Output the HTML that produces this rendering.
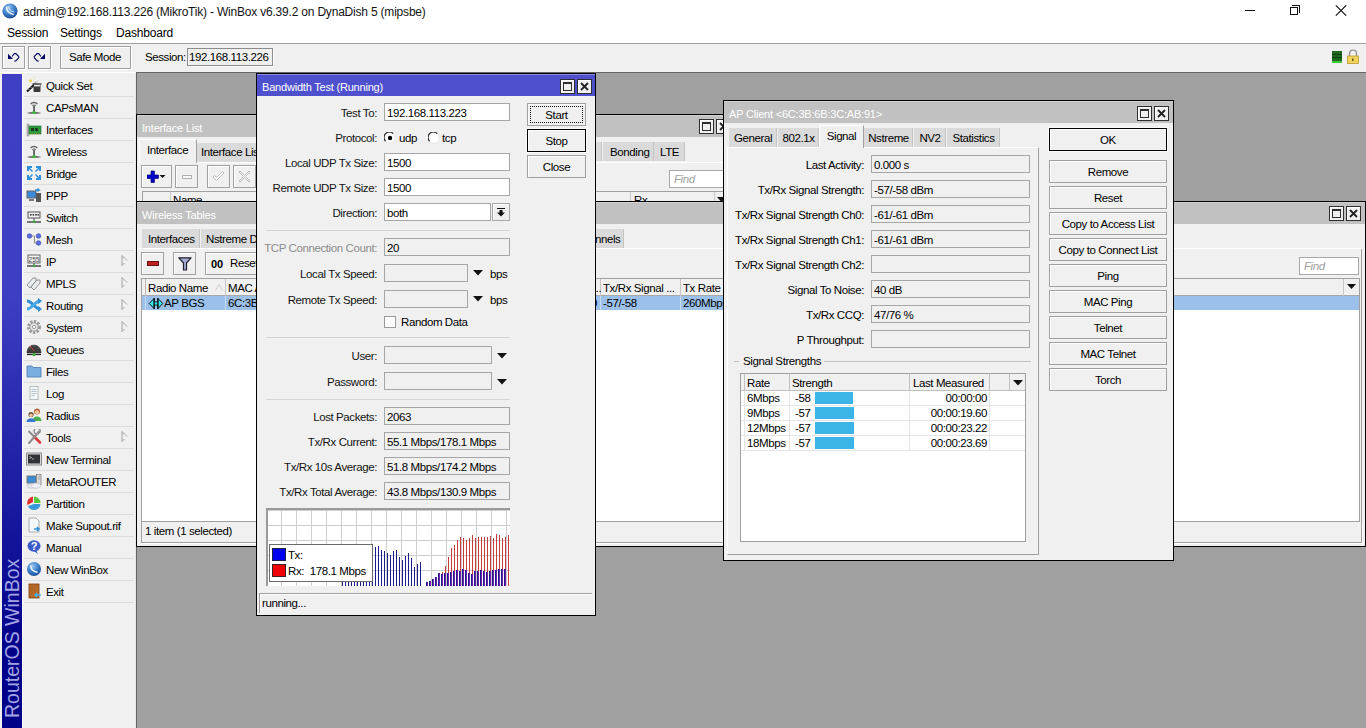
<!DOCTYPE html>
<html><head><meta charset="utf-8">
<style>
*{box-sizing:border-box}
html,body{margin:0;padding:0}
body{width:1366px;height:728px;overflow:hidden;position:relative;background:#fff;font-family:"Liberation Sans",sans-serif;font-size:11.5px;letter-spacing:-0.4px;color:#000}
.a{position:absolute}
.t{position:absolute;white-space:nowrap;line-height:14px}
.rt{position:absolute;white-space:nowrap;line-height:14px;text-align:right}
.btn{position:absolute;background:#e1e1e1;border:1px solid #adadad}
.fld{position:absolute;background:#fff;border:1px solid #a0a0a0}
.dis{position:absolute;background:#f0f0f0;border:1px solid #a0a0a0}
.win{position:absolute;background:#f0f0f0;border:1px solid #000;overflow:hidden}
.ttl{position:absolute;left:0;right:0;top:0;height:22px;background:#c1c1c1;border-top:1px solid #d2d2d2}
.ttlA{position:absolute;left:0;right:0;top:0;height:22px;background:#4e50ce;border-top:1px solid #8c8cd8}
.ttx{position:absolute;left:4px;top:4px;color:#fff;font-size:11px;letter-spacing:-0.2px;white-space:nowrap;line-height:14px}
.wb{position:absolute;width:15px;height:15px;background:#f0f0f0;border:1px solid #2e2e2e;box-shadow:inset 1px 1px 0 #fff}
.tab{position:absolute;background:#dadada;height:19px;border-right:1px solid #c4c4c4}
.tabA{position:absolute;background:#f0f0f0;border-left:1px solid #fff;border-top:1px solid #fff;border-right:1px solid #a0a0a0}
.sep{position:absolute;height:1px;background:#d7d7d7}

</style></head>
<body>
<!-- title bar -->
<svg class="a" style="left:2px;top:3px" width="16" height="16" viewBox="0 0 16 16">
 <defs><radialGradient id="gI" cx="40%" cy="30%" r="75%"><stop offset="0" stop-color="#9cc8f0"/><stop offset="0.55" stop-color="#3a7cc8"/><stop offset="1" stop-color="#1a4890"/></radialGradient></defs>
 <circle cx="8" cy="8" r="7.6" fill="url(#gI)"/>
 <path d="M4.6 3.8 Q4.2 10 11.8 11.6" stroke="#fff" stroke-width="1.3" fill="none" opacity=".95"/>
 <path d="M6.8 3.6 Q6.6 8 12.4 9" stroke="#fff" stroke-width="0.9" fill="none" opacity=".8"/>
</svg>
<div class="t" style="left:23px;top:5px;font-size:12px;letter-spacing:-0.2px;color:#141414">admin@192.168.113.226 (MikroTik) - WinBox v6.39.2 on DynaDish 5 (mipsbe)</div>
<div class="a" style="left:1245px;top:10px;width:10px;height:1px;background:#111"></div>
<div class="a" style="left:1292px;top:5px;width:8px;height:8px;border-top:1px solid #111;border-right:1px solid #111"></div>
<div class="a" style="left:1290px;top:7px;width:8px;height:8px;border:1px solid #111;background:#fff"></div>
<svg class="a" style="left:1335px;top:5px" width="12" height="11" viewBox="0 0 12 11"><path d="M0.8 0.3 L11.2 10.7 M11.2 0.3 L0.8 10.7" stroke="#111" stroke-width="1.05"/></svg>
<!-- menu -->
<div class="t" style="left:7px;top:26px;font-size:12px;letter-spacing:-0.2px">Session</div>
<div class="t" style="left:60px;top:26px;font-size:12px;letter-spacing:-0.2px">Settings</div>
<div class="t" style="left:116px;top:26px;font-size:12px;letter-spacing:-0.2px">Dashboard</div>
<div class="a" style="left:0;top:43px;width:1366px;height:1px;background:#a0a0a0"></div>
<!-- toolbar -->
<div class="a" style="left:0;top:44px;width:1366px;height:28px;background:#f0f0f0"></div>
<div class="btn" style="left:2px;top:46px;width:23px;height:23px;background:#efefef;border-color:#a0a0a0;box-shadow:inset 1px 1px 0 #fff,1px 1px 0 #fff"></div>
<div class="btn" style="left:28px;top:46px;width:23px;height:23px;background:#efefef;border-color:#a0a0a0;box-shadow:inset 1px 1px 0 #fff,1px 1px 0 #fff"></div>
<svg class="a" style="left:0;top:44px" width="56" height="28" viewBox="0 44 56 28">
 <path d="M8 53.8 L8 58.9 L13 58.9 Z" fill="#000060"/>
 <path d="M12 56.5 L14.3 53.6 L15.9 53.6 L18.7 56.4 L18.7 57.9 L15.8 61 L14.2 61" stroke="#000060" stroke-width="1.1" fill="none"/>
 <path d="M45 53.8 L45 58.9 L40 58.9 Z" fill="#000060"/>
 <path d="M41 56.5 L38.7 53.6 L37.1 53.6 L34.3 56.4 L34.3 57.9 L37.2 61 L38.8 61" stroke="#000060" stroke-width="1.1" fill="none"/>
</svg>
<div class="btn" style="left:60px;top:46px;width:71px;height:23px;background:#efefef;border-color:#a0a0a0;box-shadow:inset 1px 1px 0 #fff,1px 1px 0 #fff"></div>
<div class="t" style="left:69px;top:50px">Safe Mode</div>
<div class="t" style="left:145px;top:50px">Session:</div>
<div class="a" style="left:187px;top:48px;width:86px;height:18px;background:#f0f0f0;border:1px solid #8c8c8c;box-shadow:1px 1px 0 #fff"></div>
<div class="t" style="left:189px;top:50px">192.168.113.226</div>
<!-- status icons -->
<div class="a" style="left:1332px;top:51px;width:10px;height:12px;background:#1e6a1e;border-bottom:2px solid #38c838"></div>
<div class="a" style="left:1332px;top:54px;width:10px;height:1px;background:#0d3d0d"></div>
<div class="a" style="left:1332px;top:57px;width:10px;height:1px;background:#0d3d0d"></div>
<svg class="a" style="left:1346px;top:49px" width="14" height="15" viewBox="0 0 14 15">
 <path d="M3.5 7 V4.5 A3.5 3.5 0 0 1 10.5 4.5 V7" stroke="#8a8a8a" stroke-width="1.2" fill="none"/>
 <rect x="1.5" y="7" width="11" height="7.5" fill="#f2d45c" stroke="#b89a2a" stroke-width="0.8"/>
 <rect x="6" y="9.5" width="1.5" height="2.5" fill="#6b5a10"/>
</svg>
<!-- MDI background -->
<div class="a" style="left:136px;top:72px;width:1230px;height:656px;background:#a0a0a0;border-left:1px solid #646464;border-top:1px solid #646464"></div>

<div class="a" style="left:0;top:73px;width:136px;height:655px;background:#f0f0f0"></div>
<div class="a" style="left:22px;top:74px;width:1px;height:654px;background:#fff"></div>
<div class="a" style="left:2px;top:74px;width:20px;height:654px;background:linear-gradient(to bottom,#3f3fc5 0%,#3e3ec4 34%,#000088 88%,#000088 100%)"></div>
<div class="a" style="left:135px;top:73px;width:1px;height:655px;background:#e6e6e6"></div>
<div class="t" style="left:12px;top:622px;width:170px;height:22px;line-height:22px;font-size:19.5px;letter-spacing:0;color:#a4a4e4;transform:translate(-85px,0) rotate(-90deg);transform-origin:85px 11px;text-align:left">RouterOS WinBox</div>
<svg class="a" style="left:26px;top:77px" width="16" height="16" viewBox="0 0 16 16"><path d="M4.5 1.5 l0.6 1.4 1.5 0.3 -1.1 1 0.3 1.5 -1.3-0.8 -1.3 0.8 0.3-1.5 -1.1-1 1.5-0.3z" fill="#f0d040"/><circle cx="8.5" cy="0.8" r="0.6" fill="#e8d060"/><path d="M1 14.5 L11 5" stroke="#111" stroke-width="2.2"/><path d="M2.5 13 L3.3 12.2 M5 10.6 L5.8 9.8" stroke="#ddd" stroke-width="1"/><path d="M9.5 6.5 L12.5 3.5" stroke="#f4f4f4" stroke-width="1.8"/><path d="M9.5 6.5 L12.5 3.5" stroke="#999" stroke-width="0.5"/><rect x="7.5" y="7" width="7" height="8" rx="0.8" fill="#3a3a3a"/><rect x="6.5" y="6.2" width="9" height="1.5" fill="#555"/><rect x="8" y="7.8" width="6" height="1.6" fill="#e8e8e8"/></svg>
<div class="t" style="left:46px;top:79px">Quick Set</div>
<div class="a" style="left:24px;top:96px;width:110px;height:1px;background:#dcdcdc"></div>
<svg class="a" style="left:26px;top:99px" width="16" height="16" viewBox="0 0 16 16"><path d="M4.6 5.2 A4.2 4.2 0 0 1 11.4 5.2" stroke="#666" stroke-width="1.4" fill="none"/><path d="M6.4 6.8 A2 2 0 0 1 9.6 6.8" stroke="#666" stroke-width="1.2" fill="none"/><rect x="7.3" y="7" width="1.5" height="6" fill="#444"/><path d="M0.5 14 Q8 12.6 15.5 14 Q8 15.2 0.5 14z" fill="#111"/><ellipse cx="8" cy="13.6" rx="2" ry="1.4" fill="#3ab83a"/></svg>
<div class="t" style="left:46px;top:101px">CAPsMAN</div>
<div class="a" style="left:24px;top:118px;width:110px;height:1px;background:#dcdcdc"></div>
<svg class="a" style="left:26px;top:121px" width="16" height="16" viewBox="0 0 16 16"><rect x="1" y="3" width="2" height="12" fill="#bbb" stroke="#888" stroke-width="0.5"/><rect x="3" y="5" width="12" height="8" fill="#2e9a3e" stroke="#1a6a2a" stroke-width="0.6"/><rect x="5" y="7" width="3" height="3" fill="#1c3a1c"/><rect x="9" y="7" width="3" height="3" fill="#1c3a1c"/><path d="M4 13 h10" stroke="#d0b040" stroke-width="1" stroke-dasharray="1 1"/></svg>
<div class="t" style="left:46px;top:123px">Interfaces</div>
<div class="a" style="left:24px;top:140px;width:110px;height:1px;background:#dcdcdc"></div>
<svg class="a" style="left:26px;top:143px" width="16" height="16" viewBox="0 0 16 16"><path d="M4.6 5.2 A4.2 4.2 0 0 1 11.4 5.2" stroke="#666" stroke-width="1.4" fill="none"/><path d="M6.4 6.8 A2 2 0 0 1 9.6 6.8" stroke="#666" stroke-width="1.2" fill="none"/><rect x="7.3" y="7" width="1.5" height="6" fill="#444"/><path d="M0.5 14 Q8 12.6 15.5 14 Q8 15.2 0.5 14z" fill="#111"/><ellipse cx="8" cy="13.6" rx="2" ry="1.4" fill="#3ab83a"/></svg>
<div class="t" style="left:46px;top:145px">Wireless</div>
<div class="a" style="left:24px;top:162px;width:110px;height:1px;background:#dcdcdc"></div>
<svg class="a" style="left:26px;top:165px" width="16" height="16" viewBox="0 0 16 16"><path d="M1 1 h5 v2 h-2 l3 3 -1 1 -3-3 v2 h-2z" fill="#2f8fd8"/><path d="M15 1 h-5 v2 h2 l-3 3 1 1 3-3 v2 h2z" fill="#2f8fd8"/><path d="M1 15 h5 v-2 h-2 l3-3 -1-1 -3 3 v-2 h-2z" fill="#2f8fd8"/><path d="M15 15 h-5 v-2 h2 l-3-3 1-1 3 3 v-2 h2z" fill="#2f8fd8"/></svg>
<div class="t" style="left:46px;top:167px">Bridge</div>
<div class="a" style="left:24px;top:184px;width:110px;height:1px;background:#dcdcdc"></div>
<svg class="a" style="left:26px;top:187px" width="16" height="16" viewBox="0 0 16 16"><rect x="1" y="4" width="9" height="7" fill="#3a8ad8" stroke="#666" stroke-width="1"/><rect x="3" y="12" width="5" height="2" fill="#777"/><rect x="10" y="6" width="5" height="9" fill="#555"/><path d="M9 3 h4 l-1.5-1.5 M13 3 l-1.5 1.5" stroke="#2f8fd8" stroke-width="1.5" fill="none"/></svg>
<div class="t" style="left:46px;top:189px">PPP</div>
<div class="a" style="left:24px;top:206px;width:110px;height:1px;background:#dcdcdc"></div>
<svg class="a" style="left:26px;top:209px" width="16" height="16" viewBox="0 0 16 16"><rect x="2" y="3" width="12" height="6" fill="#f4f4f4" stroke="#555" stroke-width="1"/><rect x="4" y="5" width="1.6" height="1.6" fill="#333"/><rect x="6.6" y="5" width="1.6" height="1.6" fill="#333"/><rect x="9.2" y="5" width="1.6" height="1.6" fill="#333"/><rect x="11.6" y="5" width="1.4" height="1.6" fill="#333"/><rect x="7.5" y="9" width="1" height="3" fill="#555"/><path d="M1 13 H15" stroke="#222" stroke-width="1.2"/><circle cx="8" cy="12.8" r="1.4" fill="#3aa83a"/></svg>
<div class="t" style="left:46px;top:211px">Switch</div>
<div class="a" style="left:24px;top:228px;width:110px;height:1px;background:#dcdcdc"></div>
<svg class="a" style="left:26px;top:231px" width="16" height="16" viewBox="0 0 16 16"><circle cx="3.5" cy="5" r="2.3" fill="#5a6ee0" stroke="#3040a0" stroke-width="0.6"/><circle cx="12.5" cy="5" r="2.3" fill="#5a6ee0" stroke="#3040a0" stroke-width="0.6"/><circle cx="12.5" cy="12" r="2.3" fill="#5a6ee0" stroke="#3040a0" stroke-width="0.6"/><path d="M6 5 H8.5 V12 H10" stroke="#888" stroke-width="1" fill="none"/></svg>
<div class="t" style="left:46px;top:233px">Mesh</div>
<div class="a" style="left:24px;top:250px;width:110px;height:1px;background:#dcdcdc"></div>
<svg class="a" style="left:26px;top:253px" width="16" height="16" viewBox="0 0 16 16"><rect x="2" y="2" width="12" height="8" fill="#f6f6f6" stroke="#666" stroke-width="1"/><text x="8" y="8.6" font-size="6.5" text-anchor="middle" font-family="Liberation Sans" fill="#444" letter-spacing="0">255</text><rect x="7.5" y="10" width="1" height="2" fill="#555"/><path d="M1 13 H15" stroke="#222" stroke-width="1.2"/><circle cx="8" cy="12.8" r="1.4" fill="#3aa83a"/></svg>
<div class="t" style="left:46px;top:255px">IP</div>
<div class="a" style="left:24px;top:272px;width:110px;height:1px;background:#dcdcdc"></div>
<svg class="a" style="left:121px;top:255px" width="7" height="11" viewBox="0 0 7 11"><path d="M1 0.5 V10.5 M1 0.5 L6 5.5 M1 10.5 L3.5 8" stroke="#9a9a9a" stroke-width="0.9" fill="none"/></svg>
<svg class="a" style="left:26px;top:275px" width="16" height="16" viewBox="0 0 16 16"><path d="M1 10 L7 3 L10 3 L10 6 L4 13 Z" fill="#e8eef0" stroke="#888" stroke-width="0.9"/><path d="M5 12 L11 5 L14 5 L14 8 L8 15 Z" fill="#e8eef0" stroke="#888" stroke-width="0.9"/></svg>
<div class="t" style="left:46px;top:277px">MPLS</div>
<div class="a" style="left:24px;top:294px;width:110px;height:1px;background:#dcdcdc"></div>
<svg class="a" style="left:121px;top:277px" width="7" height="11" viewBox="0 0 7 11"><path d="M1 0.5 V10.5 M1 0.5 L6 5.5 M1 10.5 L3.5 8" stroke="#9a9a9a" stroke-width="0.9" fill="none"/></svg>
<svg class="a" style="left:26px;top:297px" width="16" height="16" viewBox="0 0 16 16"><path d="M1 4 C6 4 9 12 14 12" stroke="#2f8fd8" stroke-width="3" fill="none"/><path d="M1 12 C6 12 9 4 14 4" stroke="#4aa8e8" stroke-width="3" fill="none"/><path d="M12 1 L16 4 L12 7z M12 9 L16 12 L12 15z" fill="#2f8fd8"/></svg>
<div class="t" style="left:46px;top:299px">Routing</div>
<div class="a" style="left:24px;top:316px;width:110px;height:1px;background:#dcdcdc"></div>
<svg class="a" style="left:121px;top:299px" width="7" height="11" viewBox="0 0 7 11"><path d="M1 0.5 V10.5 M1 0.5 L6 5.5 M1 10.5 L3.5 8" stroke="#9a9a9a" stroke-width="0.9" fill="none"/></svg>
<svg class="a" style="left:26px;top:319px" width="16" height="16" viewBox="0 0 16 16"><circle cx="8" cy="8" r="5.5" fill="none" stroke="#999" stroke-width="3" stroke-dasharray="2.2 1.4"/><circle cx="8" cy="8" r="4.2" fill="#e4e4e4" stroke="#999" stroke-width="1"/><circle cx="8" cy="8" r="1.6" fill="#fff" stroke="#888" stroke-width="0.8"/></svg>
<div class="t" style="left:46px;top:321px">System</div>
<div class="a" style="left:24px;top:338px;width:110px;height:1px;background:#dcdcdc"></div>
<svg class="a" style="left:121px;top:321px" width="7" height="11" viewBox="0 0 7 11"><path d="M1 0.5 V10.5 M1 0.5 L6 5.5 M1 10.5 L3.5 8" stroke="#9a9a9a" stroke-width="0.9" fill="none"/></svg>
<svg class="a" style="left:26px;top:341px" width="16" height="16" viewBox="0 0 16 16"><path d="M1 11 A7 7 0 0 1 15 11 V12 H1z" fill="#3c3c3c" stroke="#222" stroke-width="0.5"/><circle cx="4" cy="7" r="0.5" fill="#aaa"/><circle cx="8" cy="5" r="0.5" fill="#aaa"/><circle cx="12" cy="7" r="0.5" fill="#aaa"/><path d="M4 5 L8.5 10" stroke="#e04040" stroke-width="1"/><path d="M1 13.5 H15" stroke="#222" stroke-width="1.2"/><circle cx="8" cy="13.5" r="1.7" fill="#3aa83a"/></svg>
<div class="t" style="left:46px;top:343px">Queues</div>
<div class="a" style="left:24px;top:360px;width:110px;height:1px;background:#dcdcdc"></div>
<svg class="a" style="left:26px;top:363px" width="16" height="16" viewBox="0 0 16 16"><path d="M1 3 h5 l1 1.5 h8 v9.5 h-14z" fill="#7aaee0" stroke="#4a7ab0" stroke-width="0.8"/></svg>
<div class="t" style="left:46px;top:365px">Files</div>
<div class="a" style="left:24px;top:382px;width:110px;height:1px;background:#dcdcdc"></div>
<svg class="a" style="left:26px;top:385px" width="16" height="16" viewBox="0 0 16 16"><path d="M4 1 l1 1 1-1 1 1 1-1 1 1 1-1 1 1 1-1 V15 l-1-1 -1 1 -1-1 -1 1 -1-1 -1 1 -1-1 -1 1z" fill="#f6f8f8" stroke="#9aa" stroke-width="0.7"/><path d="M5.5 4.5 h5 M5.5 6.5 h5 M5.5 8.5 h5 M5.5 10.5 h3" stroke="#8aa0b0" stroke-width="0.6"/></svg>
<div class="t" style="left:46px;top:387px">Log</div>
<div class="a" style="left:24px;top:404px;width:110px;height:1px;background:#dcdcdc"></div>
<svg class="a" style="left:26px;top:407px" width="16" height="16" viewBox="0 0 16 16"><circle cx="11" cy="4.5" r="3" fill="#b8643a"/><circle cx="11" cy="5.3" r="2" fill="#f0c8a0"/><path d="M6.5 14 a4.5 4.5 0 0 1 9 0z" fill="#4ab04a"/><circle cx="5" cy="7.5" r="2.6" fill="#6a4a2a"/><circle cx="5" cy="8.2" r="1.8" fill="#e8c0a0"/><path d="M0.5 15 a4.5 3.8 0 0 1 9 0z" fill="#3a7ad0"/></svg>
<div class="t" style="left:46px;top:409px">Radius</div>
<div class="a" style="left:24px;top:426px;width:110px;height:1px;background:#dcdcdc"></div>
<svg class="a" style="left:26px;top:429px" width="16" height="16" viewBox="0 0 16 16"><path d="M2.5 2 L9 8.5" stroke="#8a8a8a" stroke-width="1.8"/><path d="M8.5 8 L14 13.5" stroke="#d83a3a" stroke-width="2.6" stroke-linecap="round"/><path d="M3 14 L11 5" stroke="#8a8a8a" stroke-width="2" stroke-linecap="round"/><path d="M10 5 A3 3 0 1 1 14 3 L12.5 4.5 L11.5 3.5 L13 2" fill="none" stroke="#8a8a8a" stroke-width="1.4"/></svg>
<div class="t" style="left:46px;top:431px">Tools</div>
<div class="a" style="left:24px;top:448px;width:110px;height:1px;background:#dcdcdc"></div>
<svg class="a" style="left:121px;top:431px" width="7" height="11" viewBox="0 0 7 11"><path d="M1 0.5 V10.5 M1 0.5 L6 5.5 M1 10.5 L3.5 8" stroke="#9a9a9a" stroke-width="0.9" fill="none"/></svg>
<svg class="a" style="left:26px;top:451px" width="16" height="16" viewBox="0 0 16 16"><rect x="0.5" y="2" width="15" height="12" fill="#d8d8d8" stroke="#8a8a8a" stroke-width="1"/><rect x="2" y="3.5" width="12" height="9" fill="#303238"/><path d="M3.5 5.5 l2 1 -2 1 M6 8 h2" stroke="#ddd" stroke-width="0.7" fill="none"/></svg>
<div class="t" style="left:46px;top:453px">New Terminal</div>
<div class="a" style="left:24px;top:470px;width:110px;height:1px;background:#dcdcdc"></div>
<svg class="a" style="left:26px;top:473px" width="16" height="16" viewBox="0 0 16 16"><rect x="1" y="3" width="9" height="7" fill="#3a8ad8" stroke="#777" stroke-width="1"/><rect x="10.5" y="1.5" width="4.5" height="10" fill="#d8d8d8" stroke="#777" stroke-width="0.7"/><path d="M12 4 h2 M12 6 h2" stroke="#888" stroke-width="0.6"/><ellipse cx="5" cy="13" rx="4" ry="2.2" fill="#e6e8f0" stroke="#aab" stroke-width="0.5"/><ellipse cx="10" cy="12.6" rx="4.5" ry="2.6" fill="#eef0f6" stroke="#aab" stroke-width="0.5"/></svg>
<div class="t" style="left:46px;top:475px">MetaROUTER</div>
<div class="a" style="left:24px;top:492px;width:110px;height:1px;background:#dcdcdc"></div>
<svg class="a" style="left:26px;top:495px" width="16" height="16" viewBox="0 0 16 16"><path d="M8 8 L8 1.5 A6.5 6.5 0 0 1 14.5 8z" fill="#5ac83a"/><path d="M7 7 L7 1.5 A6.5 6.5 0 0 0 1.5 10z" fill="#e03030"/><path d="M8 9 L14.5 9 A6.5 6.5 0 0 1 2 11z" fill="#3a9ad8"/></svg>
<div class="t" style="left:46px;top:497px">Partition</div>
<div class="a" style="left:24px;top:514px;width:110px;height:1px;background:#dcdcdc"></div>
<svg class="a" style="left:26px;top:517px" width="16" height="16" viewBox="0 0 16 16"><path d="M3 1 h7 l3 3 v11 h-10z" fill="#f4f8fc" stroke="#999" stroke-width="0.8"/><path d="M8 12 h5 M11 10 l2 2 -2 2" stroke="#2f8fd8" stroke-width="1.6" fill="none"/></svg>
<div class="t" style="left:46px;top:519px">Make Supout.rif</div>
<div class="a" style="left:24px;top:536px;width:110px;height:1px;background:#dcdcdc"></div>
<svg class="a" style="left:26px;top:539px" width="16" height="16" viewBox="0 0 16 16"><ellipse cx="8" cy="7" rx="6.5" ry="5.8" fill="#3a5ac8"/><path d="M10 11 L12 15 L8 12z" fill="#3a5ac8"/><text x="8" y="11" font-size="11" font-weight="bold" text-anchor="middle" font-family="Liberation Sans" fill="#fff" letter-spacing="0">?</text></svg>
<div class="t" style="left:46px;top:541px">Manual</div>
<div class="a" style="left:24px;top:558px;width:110px;height:1px;background:#dcdcdc"></div>
<svg class="a" style="left:26px;top:561px" width="16" height="16" viewBox="0 0 16 16"><defs><radialGradient id="gW" cx="40%" cy="30%" r="75%"><stop offset="0" stop-color="#9cc8f0"/><stop offset="0.55" stop-color="#3a7cc8"/><stop offset="1" stop-color="#1a4890"/></radialGradient></defs><circle cx="8" cy="8" r="7" fill="url(#gW)"/><path d="M4.8 4 Q4.4 10 11.6 11.4" stroke="#fff" stroke-width="1.2" fill="none"/></svg>
<div class="t" style="left:46px;top:563px">New WinBox</div>
<div class="a" style="left:24px;top:580px;width:110px;height:1px;background:#dcdcdc"></div>
<svg class="a" style="left:26px;top:583px" width="16" height="16" viewBox="0 0 16 16"><rect x="3" y="1" width="10" height="14" fill="#b86a2a" stroke="#7a3a10" stroke-width="0.8"/><path d="M6 3 V13 M9 3 V13" stroke="#9a5a1a" stroke-width="0.6"/><path d="M9 12 h6 M11 10 l-2 2 2 2" stroke="#4ab0e8" stroke-width="1.5" fill="none"/></svg>
<div class="t" style="left:46px;top:585px">Exit</div>
<div class="a" style="left:24px;top:602px;width:110px;height:1px;background:#dcdcdc"></div>

<!-- Interface List window -->
<div class="win" style="left:136px;top:114px;width:600px;height:200px">
 <div class="ttl"><div class="ttx" style="left:5px;top:5px">Interface List</div></div>
 <div class="wb" style="left:562px;top:4px"><div class="a" style="left:2px;top:2px;width:9px;height:9px;border:1px solid #2e2e2e;border-top-width:2px"></div></div>
 <div class="wb" style="left:579px;top:4px"><svg class="a" style="left:2px;top:2px" width="9" height="9" viewBox="0 0 9 9"><path d="M1 1 L8 8 M8 1 L1 8" stroke="#222" stroke-width="1.8"/></svg></div>
 <!-- tabs -->
 <div class="a" style="left:2px;top:47px;width:596px;height:1px;background:#fff"></div>
 <div class="tab" style="left:60px;top:28px;width:68px"></div>
 <div class="t" style="left:64px;top:30px">Interface List</div>
 <div class="tab" style="left:420px;top:27px;width:45px"></div>
 <div class="tab" style="left:466px;top:27px;width:51px"></div>
 <div class="t" style="left:473px;top:30px">Bonding</div>
 <div class="tab" style="left:517px;top:27px;width:31px"></div>
 <div class="t" style="left:523px;top:30px">LTE</div>
 <div class="tabA" style="left:2px;top:24px;width:58px;height:24px"></div>
 <div class="t" style="left:10px;top:28px">Interface</div>
 <!-- toolbar -->
 <div class="btn" style="left:4px;top:50px;width:31px;height:23px;background:#f0f0f0;border-color:#a0a0a0;box-shadow:inset 1px 1px 0 #fff"></div>
 <svg class="a" style="left:10px;top:55px" width="20" height="14" viewBox="0 0 20 14"><path d="M4 1 h3.4 v4 h4 v3.4 h-4 v4 h-3.4 v-4 h-4 v-3.4 h4z" fill="#0000d0" stroke="#000060" stroke-width="0.7"/><path d="M12.5 5 h6 l-3 3z" fill="#111"/></svg>
 <div class="btn" style="left:38px;top:50px;width:23px;height:23px;background:#f0f0f0;border-color:#a0a0a0;box-shadow:inset 1px 1px 0 #fff"></div>
 <div class="a" style="left:45px;top:60px;width:10px;height:4px;border:1px solid #b0b0b0;background:#fafafa"></div>
 <div class="btn" style="left:70px;top:50px;width:23px;height:23px;background:#f0f0f0;border-color:#a0a0a0;box-shadow:inset 1px 1px 0 #fff"></div>
 <svg class="a" style="left:75px;top:55px" width="13" height="13" viewBox="0 0 13 13"><path d="M1 7 L4.5 10.5 L12 3 L10.5 1.5 L4.5 7.5 L2.5 5.5z" fill="#f8f8f8" stroke="#b0b0b0" stroke-width="0.8"/></svg>
 <div class="btn" style="left:96px;top:50px;width:23px;height:23px;background:#f0f0f0;border-color:#a0a0a0;box-shadow:inset 1px 1px 0 #fff"></div>
 <svg class="a" style="left:101px;top:55px" width="13" height="13" viewBox="0 0 13 13"><path d="M2 1 L6.5 5.5 L11 1 L12 2 L7.5 6.5 L12 11 L11 12 L6.5 7.5 L2 12 L1 11 L5.5 6.5 L1 2z" fill="#f8f8f8" stroke="#b0b0b0" stroke-width="0.8"/></svg>
 <div class="fld" style="left:532px;top:55px;width:70px;height:18px;border-color:#a8a8a8"></div>
 <div class="t" style="left:537px;top:57px;color:#a0a0a0;font-style:italic">Find</div>
 <!-- header -->
 <div class="a" style="left:5px;top:76px;width:590px;height:30px;background:#f0f0f0;border:1px solid #a0a0a0"></div>
 <div class="a" style="left:33px;top:77px;width:1px;height:20px;background:#c8c8c8"></div>
 <div class="t" style="left:36px;top:78px">Name</div>
 <div class="a" style="left:493px;top:77px;width:1px;height:20px;background:#c8c8c8"></div>
 <div class="t" style="left:497px;top:78px">Rx</div>
 <div class="a" style="left:577px;top:77px;width:1px;height:20px;background:#c8c8c8"></div>
 <svg class="a" style="left:580px;top:82px" width="9" height="6" viewBox="0 0 9 6"><path d="M0 0 h9 l-4.5 5z" fill="#111"/></svg>
</div>

<!-- Wireless Tables window -->
<div class="win" style="left:136px;top:201px;width:1230px;height:346px">
 <div class="ttl"><div class="ttx" style="left:5px;top:5px">Wireless Tables</div></div>
 <div class="wb" style="left:1192px;top:4px"><div class="a" style="left:2px;top:2px;width:9px;height:9px;border:1px solid #2e2e2e;border-top-width:2px"></div></div>
 <div class="wb" style="left:1209px;top:4px"><svg class="a" style="left:2px;top:2px" width="9" height="9" viewBox="0 0 9 9"><path d="M1 1 L8 8 M8 1 L1 8" stroke="#222" stroke-width="1.8"/></svg></div>
 <!-- tabs -->
 <div class="a" style="left:2px;top:46px;width:1224px;height:1px;background:#fff"></div>
 <div class="tab" style="left:5px;top:27px;width:58px"></div>
 <div class="t" style="left:11px;top:30px">Interfaces</div>
 <div class="tab" style="left:64px;top:27px;width:78px"></div>
 <div class="t" style="left:69px;top:30px">Nstreme Dual</div>
 <div class="tab" style="left:143px;top:27px;width:66px"></div>
 <div class="t" style="left:148px;top:30px">Access List</div>
 <div class="tabA" style="left:210px;top:24px;width:72px;height:23px"></div>
 <div class="t" style="left:216px;top:28px">Registration</div>
 <div class="tab" style="left:282px;top:27px;width:74px"></div>
 <div class="t" style="left:287px;top:30px">Connect List</div>
 <div class="tab" style="left:357px;top:27px;width:98px"></div>
 <div class="t" style="left:362px;top:30px">Security Profiles</div>
 <div class="tab" style="left:433px;top:27px;width:54px"></div>
 <div class="t" style="left:438px;top:30px">Channels</div>
 <!-- toolbar -->
 <div class="btn" style="left:4px;top:50px;width:23px;height:23px;background:#f0f0f0;border-color:#a0a0a0;box-shadow:inset 1px 1px 0 #fff"></div>
 <div class="a" style="left:10px;top:59px;width:12px;height:5px;background:#c02020;border:1px solid #6a1010"></div>
 <div class="btn" style="left:36px;top:50px;width:23px;height:23px;background:#f0f0f0;border-color:#a0a0a0;box-shadow:inset 1px 1px 0 #fff"></div>
 <svg class="a" style="left:41px;top:55px" width="14" height="14" viewBox="0 0 14 14"><path d="M0.8 0.8 H13 L8.5 6 V13 H5.5 V6z" fill="#a4acd4" stroke="#20202a" stroke-width="1.2" stroke-linejoin="round"/></svg>
 <div class="btn" style="left:68px;top:50px;width:112px;height:23px;background:#f0f0f0;border-color:#a0a0a0;box-shadow:inset 1px 1px 0 #fff"></div>
 <div class="t" style="left:74px;top:55px;font-weight:bold;font-size:11px;letter-spacing:0">00</div>
 <div class="t" style="left:93px;top:54px">Reset Counters</div>
 <div class="fld" style="left:1162px;top:55px;width:60px;height:18px;border-color:#a8a8a8"></div>
 <div class="t" style="left:1167px;top:57px;color:#a0a0a0;font-style:italic">Find</div>
 <div class="a" style="left:1224px;top:47px;width:1px;height:293px;background:#a0a0a0"></div>
 <!-- table -->
 <div class="a" style="left:4px;top:76px;width:1219px;height:244px;background:#fff;border:1px solid #a0a0a0"></div>
 <div class="a" style="left:5px;top:77px;width:1217px;height:17px;background:#f0f0f0;border-bottom:1px solid #a8a8a8"></div>
 <div class="a" style="left:8px;top:77px;width:1px;height:17px;background:#b8b8b8"></div>
 <div class="a" style="left:88px;top:77px;width:1px;height:17px;background:#c8c8c8"></div>
 <div class="t" style="left:11px;top:79px">Radio Name</div>
 <svg class="a" style="left:78px;top:82px" width="8" height="7" viewBox="0 0 8 7"><path d="M0.5 6.5 L4 0.5 L7.5 6.5" stroke="#c8c8c8" stroke-width="0.9" fill="none"/></svg>
 <div class="t" style="left:91px;top:79px">MAC Address</div>
 <div class="a" style="left:463px;top:77px;width:1px;height:17px;background:#c8c8c8"></div>
 <div class="t" style="left:466px;top:79px">Tx/Rx Signal ...</div>
 <div class="a" style="left:543px;top:77px;width:1px;height:17px;background:#c8c8c8"></div>
 <div class="t" style="left:546px;top:79px">Tx Rate</div>
 <div class="a" style="left:1206px;top:77px;width:1px;height:17px;background:#c8c8c8"></div>
 <svg class="a" style="left:1210px;top:82px" width="9" height="6" viewBox="0 0 9 6"><path d="M0 0 h9 l-4.5 5z" fill="#111"/></svg>
 <div class="a" style="left:5px;top:94px;width:1217px;height:14px;background:#9bc0ea"></div>
 <div class="a" style="left:8px;top:94px;width:1px;height:14px;background:#c8dcf4"></div>
 <div class="a" style="left:88px;top:94px;width:1px;height:14px;background:#c8dcf4"></div>
 <div class="a" style="left:463px;top:94px;width:1px;height:14px;background:#c8dcf4"></div>
 <div class="a" style="left:543px;top:94px;width:1px;height:14px;background:#c8dcf4"></div>
 <svg class="a" style="left:11px;top:95px" width="16" height="13" viewBox="0 0 17 14"><path d="M1.2 7 L6.5 1.5 V12.5z M15.8 7 L10.5 1.5 V12.5z" fill="#3ae8f0" stroke="#000" stroke-width="1" stroke-linejoin="miter"/><rect x="6.5" y="5.3" width="4" height="3.4" fill="#3ae8f0"/><path d="M6.5 5.3 H10.5 M6.5 8.7 H10.5" stroke="#000" stroke-width="0.9"/><path d="M6.5 1 V13 M10.5 1 V13" stroke="#000" stroke-width="1.1"/></svg>
 <div class="t" style="left:27px;top:94px">AP BGS</div>
 <div class="t" style="left:91px;top:94px">6C:3B:6B:3C:AB:91</div>
 <div class="t" style="left:454px;top:94px">0</div>
 <div class="t" style="left:441px;top:79px">ed ...</div>
 <div class="t" style="left:466px;top:94px">-57/-58</div>
 <div class="t" style="left:546px;top:94px">260Mbps</div>
 <!-- status -->
 <div class="a" style="left:4px;top:320px;width:1221px;height:21px;border-left:1px solid #a0a0a0;border-bottom:1px solid #a0a0a0;box-shadow:1px 1px 0 #fff"></div>
 <div class="t" style="left:8px;top:322px">1 item (1 selected)</div>
</div>

<div class="win" style="left:256px;top:73px;width:340px;height:543px">
 <div class="ttlA"><div class="ttx" style="left:5px;top:5px">Bandwidth Test (Running)</div></div>
 <div class="wb" style="left:303px;top:5px"><div class="a" style="left:2px;top:2px;width:9px;height:9px;border:1px solid #2e2e2e;border-top-width:2px"></div></div>
 <div class="wb" style="left:320px;top:5px"><svg class="a" style="left:2px;top:2px" width="9" height="9" viewBox="0 0 9 9"><path d="M1 1 L8 8 M8 1 L1 8" stroke="#222" stroke-width="1.8"/></svg></div>
 <div class="rt" style="left:0;width:120px;top:32px;color:#141414">Test To:</div>
 <div class="a" style="left:127px;top:29px;width:126px;height:18px;background:#fff;border:1px solid #a6a6a6"></div>
 <div class="t" style="left:130px;top:32px">192.168.113.223</div>
 <div class="rt" style="left:0;width:120px;top:57px;color:#141414">Protocol:</div>
 <svg class="a" style="left:127px;top:58px" width="12" height="12" viewBox="0 0 12 12"><circle cx="6" cy="6" r="5.3" fill="#fff" stroke="#e4e4e4" stroke-width="0.9"/><path d="M1.6 9.2 A5.2 5.2 0 0 1 9.2 1.6" stroke="#222" stroke-width="1.1" fill="none"/><circle cx="6" cy="6" r="2.2" fill="#000"/></svg>
 <div class="t" style="left:142px;top:57px">udp</div>
 <svg class="a" style="left:171px;top:58px" width="12" height="12" viewBox="0 0 12 12"><circle cx="6" cy="6" r="5.3" fill="#fff" stroke="#e4e4e4" stroke-width="0.9"/><path d="M1.6 9.2 A5.2 5.2 0 0 1 9.2 1.6" stroke="#222" stroke-width="1.1" fill="none"/></svg>
 <div class="t" style="left:185px;top:57px">tcp</div>
 <div class="rt" style="left:0;width:120px;top:82px;color:#141414">Local UDP Tx Size:</div>
 <div class="a" style="left:127px;top:79px;width:126px;height:18px;background:#fff;border:1px solid #a6a6a6"></div>
 <div class="t" style="left:130px;top:82px">1500</div>
 <div class="rt" style="left:0;width:120px;top:107px;color:#141414">Remote UDP Tx Size:</div>
 <div class="a" style="left:127px;top:104px;width:126px;height:18px;background:#fff;border:1px solid #a6a6a6"></div>
 <div class="t" style="left:130px;top:107px">1500</div>
 <div class="rt" style="left:0;width:120px;top:132px;color:#141414">Direction:</div>
 <div class="a" style="left:127px;top:129px;width:107px;height:18px;background:#fff;border:1px solid #a6a6a6"></div>
 <div class="t" style="left:130px;top:132px">both</div>
 <div class="a" style="left:235px;top:129px;width:18px;height:18px;background:#f0f0f0;border:1px solid #a6a6a6;box-shadow:inset 1px 1px 0 #fff"></div>
 <svg class="a" style="left:239px;top:134px" width="10" height="9" viewBox="0 0 10 9"><path d="M1 0.5 h8" stroke="#111" stroke-width="1"/><path d="M3.5 2 h3 v2.5 h2.5 l-4 4 -4-4 h2.5z" fill="#111"/></svg>
 <div class="a" style="left:9px;top:156px;width:244px;height:1px;background:#d4d4d4"></div>
 <div class="rt" style="left:0;width:120px;top:167px;color:#8c8c8c">TCP Connection Count:</div>
 <div class="a" style="left:127px;top:164px;width:126px;height:18px;background:#f0f0f0;border:1px solid #a6a6a6"></div>
 <div class="t" style="left:130px;top:167px">20</div>
 <div class="rt" style="left:0;width:120px;top:193px;color:#141414">Local Tx Speed:</div>
 <div class="a" style="left:127px;top:190px;width:84px;height:18px;background:#f0f0f0;border:1px solid #a6a6a6"></div>
 <svg class="a" style="left:216px;top:196px" width="10" height="6" viewBox="0 0 10 6"><path d="M0 0 h10 l-5 5.5z" fill="#111"/></svg>
 <div class="t" style="left:233px;top:193px">bps</div>
 <div class="rt" style="left:0;width:120px;top:219px;color:#141414">Remote Tx Speed:</div>
 <div class="a" style="left:127px;top:216px;width:84px;height:18px;background:#f0f0f0;border:1px solid #a6a6a6"></div>
 <svg class="a" style="left:216px;top:222px" width="10" height="6" viewBox="0 0 10 6"><path d="M0 0 h10 l-5 5.5z" fill="#111"/></svg>
 <div class="t" style="left:233px;top:219px">bps</div>
 <div class="a" style="left:127px;top:242px;width:12px;height:12px;background:#fff;border:1px solid #9a9a9a"></div>
 <div class="t" style="left:144px;top:241px">Random Data</div>
 <div class="a" style="left:9px;top:263px;width:244px;height:1px;background:#d4d4d4"></div>
 <div class="rt" style="left:0;width:120px;top:275px;color:#141414">User:</div>
 <div class="a" style="left:127px;top:272px;width:108px;height:18px;background:#f0f0f0;border:1px solid #a6a6a6"></div>
 <svg class="a" style="left:240px;top:279px" width="10" height="6" viewBox="0 0 10 6"><path d="M0 0 h10 l-5 5.5z" fill="#111"/></svg>
 <div class="rt" style="left:0;width:120px;top:301px;color:#141414">Password:</div>
 <div class="a" style="left:127px;top:298px;width:108px;height:18px;background:#f0f0f0;border:1px solid #a6a6a6"></div>
 <svg class="a" style="left:240px;top:305px" width="10" height="6" viewBox="0 0 10 6"><path d="M0 0 h10 l-5 5.5z" fill="#111"/></svg>
 <div class="a" style="left:9px;top:325px;width:244px;height:1px;background:#d4d4d4"></div>
 <div class="rt" style="left:0;width:120px;top:336px;color:#141414">Lost Packets:</div>
 <div class="a" style="left:127px;top:333px;width:126px;height:18px;background:#f0f0f0;border:1px solid #a6a6a6"></div>
 <div class="t" style="left:130px;top:336px">2063</div>
 <div class="rt" style="left:0;width:120px;top:361px;color:#141414">Tx/Rx Current:</div>
 <div class="a" style="left:127px;top:358px;width:126px;height:18px;background:#f0f0f0;border:1px solid #a6a6a6"></div>
 <div class="t" style="left:130px;top:361px">55.1 Mbps/178.1 Mbps</div>
 <div class="rt" style="left:0;width:120px;top:386px;color:#141414">Tx/Rx 10s Average:</div>
 <div class="a" style="left:127px;top:383px;width:126px;height:18px;background:#f0f0f0;border:1px solid #a6a6a6"></div>
 <div class="t" style="left:130px;top:386px">51.8 Mbps/174.2 Mbps</div>
 <div class="rt" style="left:0;width:120px;top:411px;color:#141414">Tx/Rx Total Average:</div>
 <div class="a" style="left:127px;top:408px;width:126px;height:18px;background:#f0f0f0;border:1px solid #a6a6a6"></div>
 <div class="t" style="left:130px;top:411px">43.8 Mbps/130.9 Mbps</div>
 <div class="a" style="left:270px;top:29px;width:59px;height:23px;background:#f0f0f0;border:1px solid #a0a0a0;box-shadow:inset 1px 1px 0 #fff"><div class="a" style="left:2px;top:2px;right:2px;bottom:2px;border:1px dotted #111"></div></div>
 <div class="t" style="left:270px;width:59px;text-align:center;top:34px">Start</div>
 <div class="a" style="left:270px;top:55px;width:59px;height:23px;background:#f0f0f0;border:1px solid #000;box-shadow:inset 1px 1px 0 #fff,0 0 0 1px #fafafa"></div>
 <div class="t" style="left:270px;width:59px;text-align:center;top:60px">Stop</div>
 <div class="a" style="left:270px;top:81px;width:59px;height:23px;background:#f0f0f0;border:1px solid #a0a0a0;box-shadow:inset 1px 1px 0 #fff"></div>
 <div class="t" style="left:270px;width:59px;text-align:center;top:86px">Close</div>
 <svg class="a" style="left:9px;top:434px" width="244" height="78" viewBox="0 0 244 78"><rect x="0" y="0" width="244" height="78" fill="#fff"/><rect x="15.0" y="0" width="1" height="78" fill="#cdcdcd"/><rect x="30.0" y="0" width="1" height="78" fill="#cdcdcd"/><rect x="45.0" y="0" width="1" height="78" fill="#cdcdcd"/><rect x="60.0" y="0" width="1" height="78" fill="#cdcdcd"/><rect x="75.0" y="0" width="1" height="78" fill="#cdcdcd"/><rect x="90.0" y="0" width="1" height="78" fill="#cdcdcd"/><rect x="105.0" y="0" width="1" height="78" fill="#cdcdcd"/><rect x="120.0" y="0" width="1" height="78" fill="#cdcdcd"/><rect x="135.0" y="0" width="1" height="78" fill="#cdcdcd"/><rect x="150.0" y="0" width="1" height="78" fill="#cdcdcd"/><rect x="165.0" y="0" width="1" height="78" fill="#cdcdcd"/><rect x="180.0" y="0" width="1" height="78" fill="#cdcdcd"/><rect x="195.0" y="0" width="1" height="78" fill="#cdcdcd"/><rect x="210.0" y="0" width="1" height="78" fill="#cdcdcd"/><rect x="225.0" y="0" width="1" height="78" fill="#cdcdcd"/><rect x="240.0" y="0" width="1" height="78" fill="#cdcdcd"/><rect x="0" y="2" width="244" height="1" fill="#cdcdcd"/><rect x="0" y="17" width="244" height="1" fill="#cdcdcd"/><rect x="0" y="32" width="244" height="1" fill="#cdcdcd"/><rect x="0" y="47" width="244" height="1" fill="#cdcdcd"/><rect x="0" y="62" width="244" height="1" fill="#cdcdcd"/><rect x="76" y="44" width="1" height="34" fill="#1c1c8c"/><rect x="79" y="44" width="1" height="34" fill="#1c1c8c"/><rect x="82" y="44" width="1" height="34" fill="#1c1c8c"/><rect x="85" y="44" width="1" height="34" fill="#1c1c8c"/><rect x="88" y="44" width="1" height="34" fill="#1c1c8c"/><rect x="91" y="44" width="1" height="34" fill="#1c1c8c"/><rect x="94" y="44" width="1" height="34" fill="#1c1c8c"/><rect x="97" y="44" width="1" height="34" fill="#1c1c8c"/><rect x="100" y="44" width="1" height="34" fill="#1c1c8c"/><rect x="103" y="44" width="1" height="34" fill="#1c1c8c"/><rect x="106" y="44" width="1" height="34" fill="#1c1c8c"/><rect x="109" y="39" width="1" height="39" fill="#1c1c8c"/><rect x="112" y="38" width="1" height="40" fill="#1c1c8c"/><rect x="115" y="42" width="1" height="36" fill="#1c1c8c"/><rect x="118" y="43" width="1" height="35" fill="#1c1c8c"/><rect x="121" y="45" width="1" height="33" fill="#1c1c8c"/><rect x="124" y="47" width="1" height="31" fill="#1c1c8c"/><rect x="127" y="43" width="1" height="35" fill="#1c1c8c"/><rect x="130" y="42" width="1" height="36" fill="#1c1c8c"/><rect x="133" y="49" width="1" height="29" fill="#1c1c8c"/><rect x="136" y="52" width="1" height="26" fill="#1c1c8c"/><rect x="139" y="48" width="1" height="30" fill="#1c1c8c"/><rect x="142" y="45" width="1" height="33" fill="#1c1c8c"/><rect x="145" y="50" width="1" height="28" fill="#1c1c8c"/><rect x="148" y="59" width="1" height="19" fill="#1c1c8c"/><rect x="151" y="56" width="1" height="22" fill="#1c1c8c"/><rect x="154" y="54" width="1" height="24" fill="#1c1c8c"/><rect x="161" y="74" width="1" height="4" fill="#c83c3c"/><rect x="160" y="74" width="1" height="4" fill="#1c1c8c"/><rect x="161" y="74" width="1" height="4" fill="#7420aa"/><rect x="164" y="74" width="1" height="4" fill="#c83c3c"/><rect x="163" y="73" width="1" height="5" fill="#1c1c8c"/><rect x="164" y="73" width="1" height="5" fill="#7420aa"/><rect x="167" y="73" width="1" height="5" fill="#c83c3c"/><rect x="166" y="71" width="1" height="7" fill="#1c1c8c"/><rect x="167" y="71" width="1" height="7" fill="#7420aa"/><rect x="170" y="71" width="1" height="7" fill="#c83c3c"/><rect x="169" y="69" width="1" height="9" fill="#1c1c8c"/><rect x="170" y="69" width="1" height="9" fill="#7420aa"/><rect x="173" y="68" width="1" height="10" fill="#c83c3c"/><rect x="172" y="65" width="1" height="13" fill="#1c1c8c"/><rect x="173" y="65" width="1" height="13" fill="#7420aa"/><rect x="176" y="64" width="1" height="14" fill="#c83c3c"/><rect x="175" y="66" width="1" height="12" fill="#1c1c8c"/><rect x="176" y="66" width="1" height="12" fill="#7420aa"/><rect x="179" y="58" width="1" height="20" fill="#c83c3c"/><rect x="178" y="65" width="1" height="13" fill="#1c1c8c"/><rect x="179" y="65" width="1" height="13" fill="#7420aa"/><rect x="182" y="49" width="1" height="29" fill="#c83c3c"/><rect x="181" y="65" width="1" height="13" fill="#1c1c8c"/><rect x="182" y="65" width="1" height="13" fill="#7420aa"/><rect x="185" y="40" width="1" height="38" fill="#c83c3c"/><rect x="184" y="64" width="1" height="14" fill="#1c1c8c"/><rect x="185" y="64" width="1" height="14" fill="#7420aa"/><rect x="188" y="37" width="1" height="41" fill="#c83c3c"/><rect x="187" y="63" width="1" height="15" fill="#1c1c8c"/><rect x="188" y="63" width="1" height="15" fill="#7420aa"/><rect x="191" y="32" width="1" height="46" fill="#c83c3c"/><rect x="190" y="62" width="1" height="16" fill="#1c1c8c"/><rect x="191" y="62" width="1" height="16" fill="#7420aa"/><rect x="194" y="29" width="1" height="49" fill="#c83c3c"/><rect x="193" y="63" width="1" height="15" fill="#1c1c8c"/><rect x="194" y="63" width="1" height="15" fill="#7420aa"/><rect x="197" y="30" width="1" height="48" fill="#c83c3c"/><rect x="196" y="61" width="1" height="17" fill="#1c1c8c"/><rect x="197" y="61" width="1" height="17" fill="#7420aa"/><rect x="200" y="32" width="1" height="46" fill="#c83c3c"/><rect x="199" y="62" width="1" height="16" fill="#1c1c8c"/><rect x="200" y="62" width="1" height="16" fill="#7420aa"/><rect x="203" y="30" width="1" height="48" fill="#c83c3c"/><rect x="202" y="65" width="1" height="13" fill="#1c1c8c"/><rect x="203" y="65" width="1" height="13" fill="#7420aa"/><rect x="206" y="27" width="1" height="51" fill="#c83c3c"/><rect x="205" y="66" width="1" height="12" fill="#1c1c8c"/><rect x="206" y="66" width="1" height="12" fill="#7420aa"/><rect x="209" y="30" width="1" height="48" fill="#c83c3c"/><rect x="208" y="63" width="1" height="15" fill="#1c1c8c"/><rect x="209" y="63" width="1" height="15" fill="#7420aa"/><rect x="212" y="29" width="1" height="49" fill="#c83c3c"/><rect x="211" y="63" width="1" height="15" fill="#1c1c8c"/><rect x="212" y="63" width="1" height="15" fill="#7420aa"/><rect x="215" y="29" width="1" height="49" fill="#c83c3c"/><rect x="214" y="62" width="1" height="16" fill="#1c1c8c"/><rect x="215" y="62" width="1" height="16" fill="#7420aa"/><rect x="218" y="29" width="1" height="49" fill="#c83c3c"/><rect x="217" y="63" width="1" height="15" fill="#1c1c8c"/><rect x="218" y="63" width="1" height="15" fill="#7420aa"/><rect x="221" y="29" width="1" height="49" fill="#c83c3c"/><rect x="220" y="64" width="1" height="14" fill="#1c1c8c"/><rect x="221" y="64" width="1" height="14" fill="#7420aa"/><rect x="224" y="28" width="1" height="50" fill="#c83c3c"/><rect x="223" y="63" width="1" height="15" fill="#1c1c8c"/><rect x="224" y="63" width="1" height="15" fill="#7420aa"/><rect x="227" y="30" width="1" height="48" fill="#c83c3c"/><rect x="226" y="62" width="1" height="16" fill="#1c1c8c"/><rect x="227" y="62" width="1" height="16" fill="#7420aa"/><rect x="230" y="26" width="1" height="52" fill="#c83c3c"/><rect x="229" y="62" width="1" height="16" fill="#1c1c8c"/><rect x="230" y="62" width="1" height="16" fill="#7420aa"/><rect x="233" y="27" width="1" height="51" fill="#c83c3c"/><rect x="232" y="61" width="1" height="17" fill="#1c1c8c"/><rect x="233" y="61" width="1" height="17" fill="#7420aa"/><rect x="236" y="30" width="1" height="48" fill="#c83c3c"/><rect x="235" y="61" width="1" height="17" fill="#1c1c8c"/><rect x="236" y="61" width="1" height="17" fill="#7420aa"/><rect x="239" y="29" width="1" height="49" fill="#c83c3c"/><rect x="238" y="61" width="1" height="17" fill="#1c1c8c"/><rect x="239" y="61" width="1" height="17" fill="#7420aa"/><rect x="242" y="27" width="1" height="51" fill="#c83c3c"/><rect x="0" y="0" width="244" height="2" fill="#9a9a9a"/><rect x="0" y="0" width="2" height="78" fill="#9a9a9a"/></svg>
 <div class="a" style="left:12px;top:470px;width:104px;height:38px;background:#fff;border:1px solid #6a6a6a"></div>
 <div class="a" style="left:15px;top:474px;width:14px;height:13px;background:#0000f0;border:1px solid #202040"></div>
 <div class="a" style="left:15px;top:490px;width:14px;height:13px;background:#f00000;border:1px solid #402020"></div>
 <div class="t" style="left:31px;top:474px">Tx:</div>
 <div class="t" style="left:31px;top:490px">Rx:&nbsp; 178.1 Mbps</div>
 <div class="a" style="left:2px;top:519px;width:333px;height:20px;border-top:1px solid #a0a0a0;border-left:1px solid #a0a0a0;box-shadow:inset 1px 1px 0 #fff"></div>
 <div class="t" style="left:5px;top:522px">running...</div>
</div>

<div class="win" style="left:723px;top:100px;width:451px;height:461px">
 <div class="ttl"><div class="ttx" style="left:5px;top:5px">AP Client &lt;6C:3B:6B:3C:AB:91&gt;</div></div>
 <div class="wb" style="left:413px;top:5px"><div class="a" style="left:2px;top:2px;width:9px;height:9px;border:1px solid #2e2e2e;border-top-width:2px"></div></div>
 <div class="wb" style="left:430px;top:5px"><svg class="a" style="left:2px;top:2px" width="9" height="9" viewBox="0 0 9 9"><path d="M1 1 L8 8 M8 1 L1 8" stroke="#222" stroke-width="1.8"/></svg></div>
 <div class="a" style="left:3px;top:46px;width:312px;height:408px;border-top:1px solid #fff;border-left:1px solid #fff;border-right:1px solid #a0a0a0;border-bottom:1px solid #a0a0a0"></div>
 <div class="tab" style="left:5px;top:27px;width:48px"></div>
 <div class="t" style="left:5px;width:48px;text-align:center;top:30px">General</div>
 <div class="tab" style="left:54px;top:27px;width:41px"></div>
 <div class="t" style="left:54px;width:41px;text-align:center;top:30px">802.1x</div>
 <div class="tab" style="left:140px;top:27px;width:49px"></div>
 <div class="t" style="left:140px;width:49px;text-align:center;top:30px">Nstreme</div>
 <div class="tab" style="left:190px;top:27px;width:32px"></div>
 <div class="t" style="left:190px;width:32px;text-align:center;top:30px">NV2</div>
 <div class="tab" style="left:223px;top:27px;width:53px"></div>
 <div class="t" style="left:223px;width:53px;text-align:center;top:30px">Statistics</div>
 <div class="tabA" style="left:95px;top:24px;width:45px;height:23px;background:#f0f0f0"></div>
 <div class="t" style="left:95px;width:45px;text-align:center;top:28px">Signal</div>
 <div class="rt" style="left:0;width:140px;top:57px">Last Activity:</div>
 <div class="a" style="left:147px;top:54px;width:159px;height:18px;background:#f0f0f0;border:1px solid #a6a6a6"></div>
 <div class="t" style="left:150px;top:57px">0.000 s</div>
 <div class="rt" style="left:0;width:140px;top:82px">Tx/Rx Signal Strength:</div>
 <div class="a" style="left:147px;top:79px;width:159px;height:18px;background:#f0f0f0;border:1px solid #a6a6a6"></div>
 <div class="t" style="left:150px;top:82px">-57/-58 dBm</div>
 <div class="rt" style="left:0;width:140px;top:107px">Tx/Rx Signal Strength Ch0:</div>
 <div class="a" style="left:147px;top:104px;width:159px;height:18px;background:#f0f0f0;border:1px solid #a6a6a6"></div>
 <div class="t" style="left:150px;top:107px">-61/-61 dBm</div>
 <div class="rt" style="left:0;width:140px;top:132px">Tx/Rx Signal Strength Ch1:</div>
 <div class="a" style="left:147px;top:129px;width:159px;height:18px;background:#f0f0f0;border:1px solid #a6a6a6"></div>
 <div class="t" style="left:150px;top:132px">-61/-61 dBm</div>
 <div class="rt" style="left:0;width:140px;top:157px">Tx/Rx Signal Strength Ch2:</div>
 <div class="a" style="left:147px;top:154px;width:159px;height:18px;background:#f0f0f0;border:1px solid #a6a6a6"></div>
 <div class="rt" style="left:0;width:140px;top:182px">Signal To Noise:</div>
 <div class="a" style="left:147px;top:179px;width:159px;height:18px;background:#f0f0f0;border:1px solid #a6a6a6"></div>
 <div class="t" style="left:150px;top:182px">40 dB</div>
 <div class="rt" style="left:0;width:140px;top:207px">Tx/Rx CCQ:</div>
 <div class="a" style="left:147px;top:204px;width:159px;height:18px;background:#f0f0f0;border:1px solid #a6a6a6"></div>
 <div class="t" style="left:150px;top:207px">47/76 %</div>
 <div class="rt" style="left:0;width:140px;top:232px">P Throughput:</div>
 <div class="a" style="left:147px;top:229px;width:159px;height:18px;background:#f0f0f0;border:1px solid #a6a6a6"></div>
 <div class="a" style="left:10px;top:260px;width:5px;height:1px;background:#c0c0c0"></div>
 <div class="t" style="left:19px;top:253px">Signal Strengths</div>
 <div class="a" style="left:100px;top:260px;width:207px;height:1px;background:#c0c0c0"></div>
 <div class="a" style="left:16px;top:272px;width:286px;height:169px;background:#fff;border:1px solid #a0a0a0"></div>
 <div class="a" style="left:17px;top:273px;width:284px;height:17px;background:#f0f0f0;border-bottom:1px solid #c0c0c0"></div>
 <div class="a" style="left:20px;top:273px;width:1px;height:17px;background:#c0c0c0"></div>
 <div class="a" style="left:65px;top:273px;width:1px;height:17px;background:#c0c0c0"></div>
 <div class="a" style="left:185px;top:273px;width:1px;height:17px;background:#c0c0c0"></div>
 <div class="a" style="left:265px;top:273px;width:1px;height:17px;background:#c0c0c0"></div>
 <div class="a" style="left:285px;top:273px;width:1px;height:17px;background:#c0c0c0"></div>
 <div class="t" style="left:23px;top:275px">Rate</div>
 <div class="t" style="left:68px;top:275px">Strength</div>
 <div class="t" style="left:189px;top:275px">Last Measured</div>
 <svg class="a" style="left:289px;top:279px" width="10" height="6" viewBox="0 0 10 6"><path d="M0 0 h10 l-5 5.5z" fill="#111"/></svg>
 <div class="a" style="left:17px;top:304px;width:284px;height:1px;background:#e4e4e4"></div>
 <div class="a" style="left:20px;top:290px;width:1px;height:15px;background:#e4e4e4"></div>
 <div class="a" style="left:65px;top:290px;width:1px;height:15px;background:#e4e4e4"></div>
 <div class="a" style="left:185px;top:290px;width:1px;height:15px;background:#e4e4e4"></div>
 <div class="a" style="left:265px;top:290px;width:1px;height:15px;background:#e4e4e4"></div>
 <div class="t" style="left:23px;top:290px">6Mbps</div>
 <div class="t" style="left:71px;top:290px">-58</div>
 <div class="a" style="left:91px;top:291px;width:38px;height:12px;background:#3db4e8"></div>
 <div class="rt" style="left:185px;width:78px;top:290px">00:00:00</div>
 <div class="a" style="left:17px;top:319px;width:284px;height:1px;background:#e4e4e4"></div>
 <div class="a" style="left:20px;top:305px;width:1px;height:15px;background:#e4e4e4"></div>
 <div class="a" style="left:65px;top:305px;width:1px;height:15px;background:#e4e4e4"></div>
 <div class="a" style="left:185px;top:305px;width:1px;height:15px;background:#e4e4e4"></div>
 <div class="a" style="left:265px;top:305px;width:1px;height:15px;background:#e4e4e4"></div>
 <div class="t" style="left:23px;top:305px">9Mbps</div>
 <div class="t" style="left:71px;top:305px">-57</div>
 <div class="a" style="left:91px;top:306px;width:39px;height:12px;background:#3db4e8"></div>
 <div class="rt" style="left:185px;width:78px;top:305px">00:00:19.60</div>
 <div class="a" style="left:17px;top:334px;width:284px;height:1px;background:#e4e4e4"></div>
 <div class="a" style="left:20px;top:320px;width:1px;height:15px;background:#e4e4e4"></div>
 <div class="a" style="left:65px;top:320px;width:1px;height:15px;background:#e4e4e4"></div>
 <div class="a" style="left:185px;top:320px;width:1px;height:15px;background:#e4e4e4"></div>
 <div class="a" style="left:265px;top:320px;width:1px;height:15px;background:#e4e4e4"></div>
 <div class="t" style="left:23px;top:320px">12Mbps</div>
 <div class="t" style="left:71px;top:320px">-57</div>
 <div class="a" style="left:91px;top:321px;width:39px;height:12px;background:#3db4e8"></div>
 <div class="rt" style="left:185px;width:78px;top:320px">00:00:23.22</div>
 <div class="a" style="left:17px;top:349px;width:284px;height:1px;background:#e4e4e4"></div>
 <div class="a" style="left:20px;top:335px;width:1px;height:15px;background:#e4e4e4"></div>
 <div class="a" style="left:65px;top:335px;width:1px;height:15px;background:#e4e4e4"></div>
 <div class="a" style="left:185px;top:335px;width:1px;height:15px;background:#e4e4e4"></div>
 <div class="a" style="left:265px;top:335px;width:1px;height:15px;background:#e4e4e4"></div>
 <div class="t" style="left:23px;top:335px">18Mbps</div>
 <div class="t" style="left:71px;top:335px">-57</div>
 <div class="a" style="left:91px;top:336px;width:39px;height:12px;background:#3db4e8"></div>
 <div class="rt" style="left:185px;width:78px;top:335px">00:00:23.69</div>
 <div class="a" style="left:325px;top:27px;width:118px;height:23px;background:#f0f0f0;border:1px solid #000;box-shadow:inset 1px 1px 0 #fff,0 0 0 1px #fafafa"></div>
 <div class="t" style="left:325px;width:118px;text-align:center;top:32px">OK</div>
 <div class="a" style="left:325px;top:59px;width:118px;height:23px;background:#f0f0f0;border:1px solid #a0a0a0;box-shadow:inset 1px 1px 0 #fff"></div>
 <div class="t" style="left:325px;width:118px;text-align:center;top:64px">Remove</div>
 <div class="a" style="left:325px;top:85px;width:118px;height:23px;background:#f0f0f0;border:1px solid #a0a0a0;box-shadow:inset 1px 1px 0 #fff"></div>
 <div class="t" style="left:325px;width:118px;text-align:center;top:90px">Reset</div>
 <div class="a" style="left:325px;top:111px;width:118px;height:23px;background:#f0f0f0;border:1px solid #a0a0a0;box-shadow:inset 1px 1px 0 #fff"></div>
 <div class="t" style="left:325px;width:118px;text-align:center;top:116px">Copy to Access List</div>
 <div class="a" style="left:325px;top:137px;width:118px;height:23px;background:#f0f0f0;border:1px solid #a0a0a0;box-shadow:inset 1px 1px 0 #fff"></div>
 <div class="t" style="left:325px;width:118px;text-align:center;top:142px">Copy to Connect List</div>
 <div class="a" style="left:325px;top:163px;width:118px;height:23px;background:#f0f0f0;border:1px solid #a0a0a0;box-shadow:inset 1px 1px 0 #fff"></div>
 <div class="t" style="left:325px;width:118px;text-align:center;top:168px">Ping</div>
 <div class="a" style="left:325px;top:189px;width:118px;height:23px;background:#f0f0f0;border:1px solid #a0a0a0;box-shadow:inset 1px 1px 0 #fff"></div>
 <div class="t" style="left:325px;width:118px;text-align:center;top:194px">MAC Ping</div>
 <div class="a" style="left:325px;top:215px;width:118px;height:23px;background:#f0f0f0;border:1px solid #a0a0a0;box-shadow:inset 1px 1px 0 #fff"></div>
 <div class="t" style="left:325px;width:118px;text-align:center;top:220px">Telnet</div>
 <div class="a" style="left:325px;top:241px;width:118px;height:23px;background:#f0f0f0;border:1px solid #a0a0a0;box-shadow:inset 1px 1px 0 #fff"></div>
 <div class="t" style="left:325px;width:118px;text-align:center;top:246px">MAC Telnet</div>
 <div class="a" style="left:325px;top:267px;width:118px;height:23px;background:#f0f0f0;border:1px solid #a0a0a0;box-shadow:inset 1px 1px 0 #fff"></div>
 <div class="t" style="left:325px;width:118px;text-align:center;top:272px">Torch</div>
</div>

</body></html>
